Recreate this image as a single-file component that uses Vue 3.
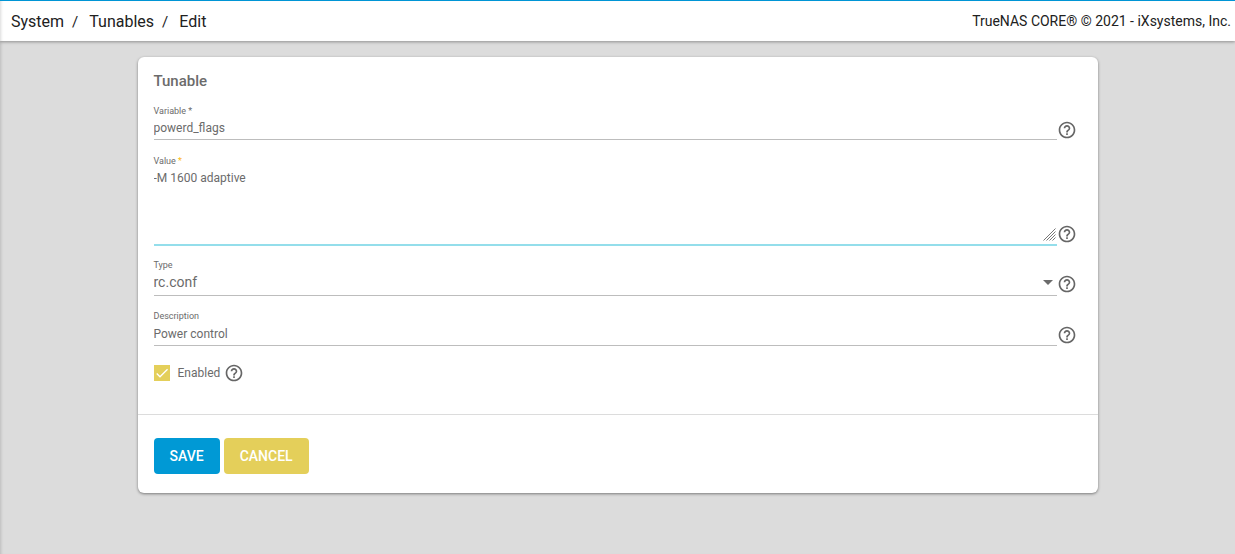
<script setup>
import { ref } from 'vue'

const crumbs = ['System', 'Tunables', 'Edit']
const variable = ref('powerd_flags')
const value = ref('-M 1600 adaptive')
const type = ref('rc.conf')
const description = ref('Power control')
const enabled = ref(true)
const helpPath =
  'M11 18h2v-2h-2v2zm1-16C6.48 2 2 6.48 2 12s4.48 10 10 10 10-4.48 10-10S17.52 2 12 2zm0 18c-4.41 0-8-3.59-8-8s3.59-8 8-8 8 3.59 8 8-3.59 8-8 8zm0-14c-2.21 0-4 1.79-4 4h2c0-1.1.9-2 2-2s2 .9 2 2c0 2-3 1.75-3 5h2c0-2.25 3-2.5 3-5 0-2.21-1.79-4-4-4z'
</script>

<template>
  <div class="page">
    <header class="topbar">
      <nav class="crumbs" aria-label="Breadcrumb">
        <template v-for="(crumb, i) in crumbs" :key="crumb">
          <span v-if="i" class="slash">/</span>
          <a href="#">{{ crumb }}</a>
        </template>
      </nav>
      <span class="copyright">TrueNAS CORE® © 2021 - iXsystems, Inc.</span>
    </header>

    <main>
      <form class="card" @submit.prevent>
        <div class="fields">
          <h1>Tunable</h1>

          <div class="row">
            <div class="field">
              <label for="variable">Variable *</label>
              <input id="variable" v-model="variable" type="text" />
            </div>
            <button type="button" class="help" aria-label="Help for Variable">
              <svg viewBox="0 0 24 24"><path :d="helpPath" /></svg>
            </button>
          </div>

          <div class="row row-area">
            <div class="field">
              <label for="value">Value <span class="required">*</span></label>
              <textarea id="value" v-model="value"></textarea>
              <svg class="grip" viewBox="0 0 13 13"><path d="M.5 12.5l12-12M3.5 12.5l9-9M6.5 12.5l6-6M9.5 12.5l3-3" /></svg>
            </div>
            <button type="button" class="help" aria-label="Help for Value">
              <svg viewBox="0 0 24 24"><path :d="helpPath" /></svg>
            </button>
          </div>

          <div class="row row-select">
            <div class="field">
              <label for="type">Type</label>
              <select id="type" v-model="type">
                <option>rc.conf</option>
              </select>
              <svg class="arrow" viewBox="0 0 10 5"><path d="M0 0h10L5 5z" /></svg>
            </div>
            <button type="button" class="help" aria-label="Help for Type">
              <svg viewBox="0 0 24 24"><path :d="helpPath" /></svg>
            </button>
          </div>

          <div class="row row-last">
            <div class="field">
              <label for="description">Description</label>
              <input id="description" v-model="description" type="text" />
            </div>
            <button type="button" class="help" aria-label="Help for Description">
              <svg viewBox="0 0 24 24"><path :d="helpPath" /></svg>
            </button>
          </div>

          <div class="check-row">
            <input id="enabled" v-model="enabled" type="checkbox" />
            <svg v-if="enabled" class="tick" viewBox="0 0 24 24"><path d="M4.1 12.7L9 17.6 20.3 6.3" /></svg>
            <label for="enabled">Enabled</label>
            <button type="button" class="help" aria-label="Help for Enabled">
              <svg viewBox="0 0 24 24"><path :d="helpPath" /></svg>
            </button>
          </div>
        </div>

        <div class="actions">
          <button type="submit" class="btn save">SAVE</button>
          <button type="button" class="btn cancel">CANCEL</button>
        </div>
      </form>
    </main>
  </div>
</template>

<style>
body {
  background: #dcdcdc;
}
</style>

<style scoped>
.page {
  min-height: 100vh;
  box-sizing: border-box;
  font-family: Roboto, "Liberation Sans", sans-serif;
  color: #6b6b6b;
  background: #dcdcdc;
  box-shadow: inset 3px 0 3px -2px rgba(0, 0, 0, 0.15);
}
.topbar {
  display: flex;
  justify-content: space-between;
  align-items: center;
  height: 40px;
  padding: 0 4px 0 11px;
  border-top: 1px solid #0095d5;
  background: #fff;
  box-shadow: 0 1px 3px rgba(0, 0, 0, 0.35), inset 3px 0 3px -2px rgba(0, 0, 0, 0.15);
  color: #212121;
}
.crumbs {
  display: flex;
  padding-top: 2px;
  font-size: 16px;
  line-height: 20px;
}
.crumbs a {
  color: inherit;
  text-decoration: none;
}
.slash {
  margin: 0 11px 0 8px;
  font-size: 15px;
}
.copyright {
  font-size: 14px;
  line-height: 20px;
}
main {
  padding: 16px;
}
.card {
  max-width: 960px;
  margin: 0 auto;
  border-radius: 6px;
  background: #fff;
  box-shadow: 0 1px 3px rgba(0, 0, 0, 0.45);
}
.fields {
  padding: 14px 21px 31px 16px;
  border-bottom: 1px solid #dcdcdc;
}
h1 {
  margin: 0 0 14px;
  font-size: 15px;
  font-weight: 500;
  line-height: 20px;
}
.row {
  display: flex;
  align-items: flex-end;
  margin-bottom: 15px;
}
.field {
  position: relative;
  display: flex;
  flex: 1;
  flex-direction: column;
}
.field label {
  font-size: 9px;
  line-height: 12px;
}
.field .required {
  color: #fdb813;
}
.field input,
.field textarea,
.field select {
  box-sizing: border-box;
  width: 100%;
  height: 23px;
  margin: 0;
  padding: 0;
  border: 0;
  border-bottom: 1px solid #bdbdbd;
  border-radius: 0;
  outline: 0;
  background: transparent;
  color: inherit;
  font-family: inherit;
  font-size: 12px;
}
.field textarea {
  height: 79px;
  padding-top: 3px;
  border-bottom: 2px solid #94deeb;
  line-height: 16px;
  resize: none;
}
.field select {
  height: 25px;
  padding-bottom: 2px;
  appearance: none;
  font-size: 14px;
}
.grip {
  position: absolute;
  right: 1px;
  bottom: 5px;
  width: 13px;
  height: 13px;
  fill: none;
  stroke: #777;
  stroke-width: 1;
}
.arrow {
  position: absolute;
  right: 4px;
  bottom: 11px;
  width: 10px;
  height: 5px;
  fill: #6b6b6b;
}
.help {
  display: block;
  width: 20px;
  height: 20px;
  padding: 0;
  border: 0;
  background: none;
}
.help svg {
  display: block;
  width: 20px;
  height: 20px;
  fill: #666;
}
.row-area {
  margin-bottom: 13px;
}
.row-select {
  margin-bottom: 14px;
}
.row-area .help,
.row-select .help {
  margin-bottom: 2px;
}
.row-last {
  margin-bottom: 17px;
}
.row-last input {
  height: 24px;
}
.row-last .help {
  margin-bottom: 1px;
}
.check-row {
  position: relative;
  display: flex;
  align-items: center;
  font-size: 12px;
  line-height: 20px;
}
.check-row input {
  appearance: none;
  width: 16px;
  height: 16px;
  margin: 0 8px 0 0;
  background: #e4cf5a;
}
.check-row .tick {
  position: absolute;
  left: 0;
  width: 16px;
  height: 16px;
  fill: none;
  stroke: #fff;
  stroke-width: 2;
  pointer-events: none;
}
.check-row .help {
  margin-left: 4px;
}
.actions {
  display: flex;
  gap: 4px;
  padding: 23px 16px 19px;
}
.btn {
  height: 36px;
  padding: 0 16px;
  border: 0;
  border-radius: 4px;
  color: #fff;
  font-family: inherit;
  font-size: 14px;
  font-weight: 500;
}
.save {
  background: #0099d5;
}
.cancel {
  background: #e4cf5a;
}
</style>
